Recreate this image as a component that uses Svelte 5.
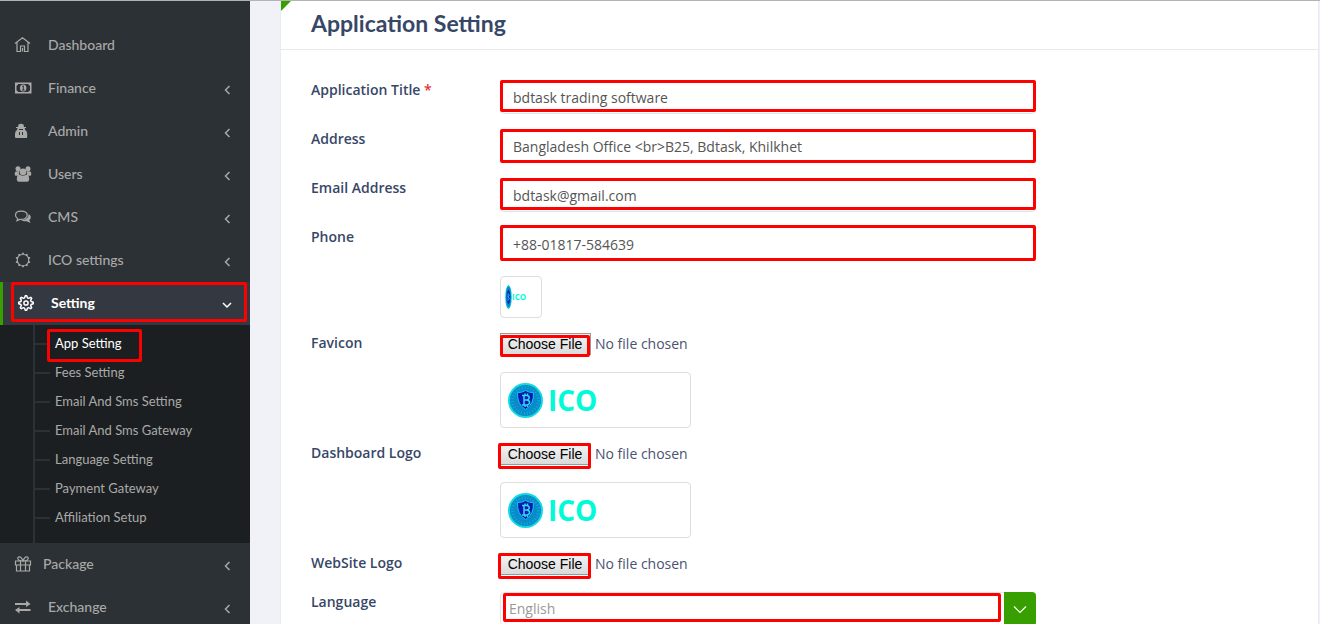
<script>
  const topItems = [
    { name: 'Dashboard', icon: 'home' },
    { name: 'Finance', icon: 'money', children: true },
    { name: 'Admin', icon: 'agent', children: true },
    { name: 'Users', icon: 'users', children: true },
    { name: 'CMS', icon: 'chat', children: true },
    { name: 'ICO settings', icon: 'sun', children: true },
    { name: 'Setting', icon: 'gear', children: true, open: true },
    { name: 'Package', icon: 'gift', children: true, tight: true },
    { name: 'Exchange', icon: 'arrows', children: true }
  ];
  const settingLinks = [
    'App Setting',
    'Fees Setting',
    'Email And Sms Setting',
    'Email And Sms Gateway',
    'Language Setting',
    'Payment Gateway',
    'Affiliation Setup'
  ];

  let fields = $state([
    { id: 'title', label: 'Application Title', type: 'text', value: 'bdtask trading software', required: true, mark: 'short' },
    { id: 'address', label: 'Address', type: 'text', value: 'Bangladesh Office <br>B25, Bdtask, Khilkhet', mark: '' },
    { id: 'email', label: 'Email Address', type: 'email', value: 'bdtask@gmail.com', mark: 'short' },
    { id: 'phone', label: 'Phone', type: 'tel', value: '+88-01817-584639', mark: 'tall', active: true }
  ]);
  const uploads = [
    { id: 'favicon', label: 'Favicon', small: true, mark: 'inner' },
    { id: 'dashboard-logo', label: 'Dashboard Logo', mark: 'outer' },
    { id: 'website-logo', label: 'WebSite Logo', mark: 'outer' }
  ];

  const points = (count, outer, inner) =>
    Array.from({ length: count * 2 }, (_, i) => {
      const r = i % 2 ? inner : outer;
      const a = (Math.PI * i) / count - Math.PI / 2;
      return `${(9 + r * Math.cos(a)).toFixed(2)},${(8 + r * Math.sin(a)).toFixed(2)}`;
    }).join(' ');

  // Outline of a cog with eight flat teeth, centred on 9,8.
  const cog = Array.from({ length: 32 }, (_, i) => {
    const r = i % 4 < 2 ? 7.3 : 5.3;
    const a = (Math.PI * 2 * (i - 0.5)) / 32 - Math.PI / 2;
    return `${(9 + r * Math.cos(a)).toFixed(2)},${(8 + r * Math.sin(a)).toFixed(2)}`;
  }).join(' ');
</script>

{#snippet icon(kind)}
  <svg class="icon" viewBox="0 0 18 16" aria-hidden="true">
    {#if kind === 'home'}
      <path d="M1 6.500 8.500.8 16 6.500M3 5.500v9h3.500V9h4v5.500H14v-9M8.500 11v3.500" class="line" />
    {:else if kind === 'money'}
      <path d="M1 2.500h16.500v11H1zM4 4a1.500 1.500 0 0 1-1.500 1.500v5A1.500 1.500 0 0 1 4 12h10.500a1.500 1.500 0 0 1 1.500-1.500v-5A1.500 1.500 0 0 1 14.500 4z" fill-rule="evenodd" />
      <ellipse cx="9.200" cy="8" rx="3.200" ry="3.600" />
      <path d="M8.200 6.500 9.300 5.800V10M8 10h2.700" class="cut" />
    {:else if kind === 'agent'}
      <path d="M4.500 1.500Q7 0 9.500 1.500L10 4h2v1h-1.300l.5 2q2 1 2 4v3q0 1-1 1H2q-1 0-1-1v-3q0-3 2-4l.5-2H2V4h2z" />
      <path d="M5 6.500h4M5.500 9v3M8.500 9v3" class="cut" />
    {:else if kind === 'users'}
      <circle cx="4" cy="2.800" r="2.500" /><circle cx="14" cy="2.800" r="2.500" />
      <path d="M.8 9V6.800Q.8 5.300 3 5.300h2.300Q4.200 8 6 9.800H2Q.8 9.800.8 9zM17.200 9V6.800q0-1.500-2.200-1.500h-2.300Q13.800 8 12 9.800h4q1.200 0 1.200-.8z" />
      <circle cx="9" cy="5.800" r="3.400" />
      <path d="M2.800 13q0-4.200 3.200-4.200 3 1.700 6 0 3.200 0 3.200 4.200 0 2.700-2.200 2.700H5q-2.200 0-2.200-2.700z" />
    {:else if kind === 'chat'}
      <path d="M7 2.200C3.500 2.200 1.500 4 1.500 6.200c0 1.600 1 2.700 2.200 3.300L3 11.600 6 10.400c4 .4 7.200-1.600 7.200-4.200S10.500 2.200 7 2.200z" class="line" />
      <path d="M14.500 5c2.500 1.200 3.200 4 .8 6l1.200 3-3.800-1.800c-2.500.3-4.200-.2-5.200-1 4 0 7.300-2.200 7-6.200z" />
    {:else if kind === 'sun'}
      <polygon points={points(10, 7.800, 5.900)} />
      <circle cx="9" cy="8" r="5.200" class="hole" />
    {:else if kind === 'gear'}
      <polygon points={cog} class="line gear" />
      <circle cx="9" cy="8" r="2.100" class="line gear" />
    {:else if kind === 'gift'}
      <path d="M1.500 5h15v4h-15zM2.500 9v6h13V9M6.500 5v10M11.500 5v10M9 5C2.500 5 3 .8 5.500.8q2 0 3.500 4.200Q10.500.8 12.500.8c2.500 0 3 4.200-3.500 4.200" class="line" />
    {:else}
      <path d="M1 4h11V1.500L16.500 5 12 8V6H1zM16.500 10H5.500V8L1 11l4.500 3.500V12h11z" />
    {/if}
  </svg>
{/snippet}

{#snippet chevron(down)}
  <svg class="chevron" viewBox="0 0 10 10" aria-hidden="true">
    <path d={down ? 'M1 3l4 4 4-4' : 'M7.500 1 3.500 5l4 4'} class="line" />
  </svg>
{/snippet}

{#snippet coin()}
  <circle cx="20.500" cy="23.500" r="17.500" fill="#12d9e3" />
  <circle cx="20.500" cy="23.500" r="15.500" fill="#078bc9" />
  <circle cx="20.500" cy="23.500" r="13" fill="none" stroke="#10a8d8" stroke-width="3" stroke-dasharray="1 2" />
  <path d="M20.500 13.500q4 2.500 8 2 .5 12-8 17-8.500-5-8-17 4 .5 8-2z" fill="#0719b5" stroke="#13c4ec" />
  <path d="M17 18.500h5q2.500.5 2.200 2.300-.2 1.700-2.200 2.200 2.600.5 2.600 2.500T22 28h-5m2-9.500V28m0-5h3M20 16.500v2m2.500-2v2M20 28v2m2.500-2v2" fill="none" stroke="#32dbef" stroke-width="1.500" />
{/snippet}

<div class="shell">
  <nav class="sidebar" aria-label="Main">
    <ul class="menu">
      {#each topItems as item}
        <li>
          <a href="#top" class="item" class:open={item.open} class:tight={item.tight}>
            {@render icon(item.icon)}
            <span class="name">{item.name}</span>
            {#if item.children}{@render chevron(item.open)}{/if}
            {#if item.open}<span class="mark around-item"></span>{/if}
          </a>
          {#if item.open}
            <ul class="submenu">
              {#each settingLinks as link, i}
                <li>
                  <a href="#sub" class:current={i === 0}>{link}{#if i === 0}<span class="mark around-link"></span>{/if}</a>
                </li>
              {/each}
            </ul>
          {/if}
        </li>
      {/each}
    </ul>
  </nav>

  <main>
    <section class="card">
      <header><h1>Application Setting</h1></header>
      <form>
        {#each fields as field}
          <div class="row">
            <label for={field.id}>{field.label}{#if field.required}&nbsp;<span class="star">*</span>{/if}</label>
            <div class="control">
              <input class="text" class:active={field.active} id={field.id} type={field.type} bind:value={field.value} />
              <span class="mark {field.mark}"></span>
            </div>
          </div>
        {/each}

        {#each uploads as upload}
          <div class="row">
            <div class="preview" class:small={upload.small}>
              {#if upload.small}
                <svg viewBox="0 0 32 32" role="img" aria-label="ICO">
                  <ellipse cx="3.500" cy="16" rx="3.300" ry="12" fill="#12d0e0" />
                  <ellipse cx="3.500" cy="16" rx="2.600" ry="10.500" fill="#0789c8" />
                  <ellipse cx="3.500" cy="16" rx="1.700" ry="7" fill="#0719b5" />
                  <path d="M3 12.500v7m0-7q3 1 0 3.500 3 1 0 3.500" fill="none" stroke="#32dbef" stroke-width=".7" />
                  <text x="7" y="19" class="ico-small">ICO</text>
                </svg>
              {:else}
                <svg viewBox="0 0 181 46" role="img" aria-label="ICO">
                  {@render coin()}
                  <text x="43" y="34" class="ico">ICO</text>
                </svg>
              {/if}
            </div>
          </div>
          <div class="row">
            <label for={upload.id}>{upload.label}</label>
            <div class="control">
              <input class="file" id={upload.id} type="file" />
              <span class="mark around-file {upload.mark}"></span>
            </div>
          </div>
        {/each}

        <div class="row">
          <label for="language">Language</label>
          <div class="control">
            <select id="language"><option>English</option><option>Bangla</option></select>
            <span class="arrow">
              <svg viewBox="0 0 14 14" aria-hidden="true"><path d="M1 4.500l6 6 6-6" class="line" /></svg>
            </span>
            <span class="mark around-select"></span>
          </div>
        </div>
      </form>
    </section>
  </main>
</div>

<style>
  :global(body) { margin: 0; background: #f1f2f7; }
  * { box-sizing: border-box; }
  .shell {
    display: flex;
    height: 100vh;
    overflow: hidden;
    border-top: 1px solid #b4b2b4;
    font: 14px/19px "Open Sans", sans-serif;
    color: #374767;
  }
  ul { list-style: none; margin: 0; padding: 0; }
  .line { fill: none; stroke: currentColor; stroke-width: 1.2; }

  .sidebar {
    flex: 0 0 250px;
    padding-top: 23px;
    background: #2c3136;
    font-family: Lato, sans-serif;
    overflow: hidden;
  }
  .item {
    position: relative;
    display: flex;
    align-items: center;
    height: 43px;
    padding: 0 18px 2px 14px;
    color: #a9aaa8;
    font-size: 14px;
    font-weight: 500;
    text-decoration: none;
  }
  .icon { width: 18px; height: 16px; margin-right: 16px; fill: currentColor; }
  .tight .icon { margin-right: 11px; }
  .name { flex: 1; }
  .cut { fill: none; stroke: #2c3136; stroke-width: 1; }
  .hole { fill: #2c3136; }
  .gear { stroke-width: 1.5; stroke-linejoin: round; }
  .chevron { width: 10px; height: 10px; margin-top: 5px; }
  .chevron .line { stroke-width: 1.5; }
  .open { border-left: 3px solid #37a000; background: #343840; color: #fff; font-weight: 700; }
  .submenu { position: relative; padding: 4px 0 11px; background: #1c1f22; }
  .submenu::before {
    content: "";
    position: absolute;
    left: 33px;
    top: 0;
    bottom: 0;
    width: 2px;
    background: #2c3136;
  }
  .submenu a {
    position: relative;
    display: block;
    padding-left: 55px;
    font-size: 13px;
    line-height: 29px;
    color: #a9aaa8;
    text-decoration: none;
  }
  .submenu a::before {
    content: "";
    position: absolute;
    left: 35px;
    top: 14px;
    width: 15px;
    height: 2px;
    background: #2c3136;
  }
  .submenu .current { color: #fff; }

  main { flex: 1; min-width: 0; padding: 0 2px 0 31px; background: #f1f2f7; }
  .card { position: relative; min-height: 100%; background: #fff; box-shadow: 0 0 2px #d8daea; }
  .card::before {
    content: "";
    position: absolute;
    left: 0;
    top: 0;
    border-top: 10px solid #37a000;
    border-right: 10px solid transparent;
  }
  header { padding: 8px 30px 12px; border-bottom: 1px solid #e8e9ec; }
  h1 { margin: 0; font: 700 23px/28px Lato, sans-serif; }
  form { display: grid; gap: 15px; padding: 30px; }
  .row { display: grid; grid-template-columns: 189fr 536fr 252fr; align-items: start; }
  label { font-weight: 600; }
  .star { color: #e5343d; }
  .control { position: relative; display: flex; min-width: 0; }
  .text, select {
    width: 100%;
    height: 34px;
    padding: 0 12px;
    border: 1px solid #e4e5e7;
    border-radius: 4px;
    background: #fff;
    font: 14px "Open Sans", sans-serif;
    color: #555;
    outline: none;
  }
  .active { border-color: #37a000; }
  select { appearance: none; padding: 0 40px 2px 8px; color: #999; }
  .arrow {
    position: absolute;
    right: 0;
    top: 0;
    bottom: 0;
    display: flex;
    align-items: center;
    justify-content: center;
    width: 32px;
    border-radius: 0 4px 4px 0;
    background: #37a000;
    color: #fff;
    pointer-events: none;
  }
  .arrow svg { width: 14px; height: 14px; }
  .preview {
    grid-column: 2;
    justify-self: start;
    width: 191px;
    padding: 4px;
    border: 1px solid #ddd;
    border-radius: 4px;
  }
  .small { width: 42px; }
  .preview svg { display: block; width: 100%; }
  .ico { font: 700 28px "Open Sans", sans-serif; fill: #00fbd9; }
  .ico-small { font: 700 8px "Liberation Sans Narrow", "Open Sans", sans-serif; fill: #00fbd9; }
  .file { width: 100%; height: 24px; font: 14px/19px "Open Sans", sans-serif; color: #4a5370; }
  .file::file-selector-button {
    width: 91px;
    height: 22px;
    margin: 0 4px 0 0;
    padding: 0 1px 0 0;
    border: 1px solid #999;
    border-radius: 0;
    background: linear-gradient(#f5f5f5, #dadada);
    font: 14px/16px "Liberation Sans", sans-serif;
    color: #000;
  }

  .mark {
    position: absolute;
    inset: 0;
    border: 3px solid #f00;
    border-radius: 2px;
    pointer-events: none;
  }
  .short { bottom: 2px; }
  .tall { top: -2px; }
  .around-item { inset: 0 3px 3px 8px; }
  .around-link { inset: 0 auto -4px 47px; width: 95px; }
  .around-file { right: auto; width: 90px; top: 2px; }
  .around-file.outer { inset: 0 auto -2px -2px; width: 93px; }
  .around-select { inset: 1px 35px 4px 3px; }
</style>
